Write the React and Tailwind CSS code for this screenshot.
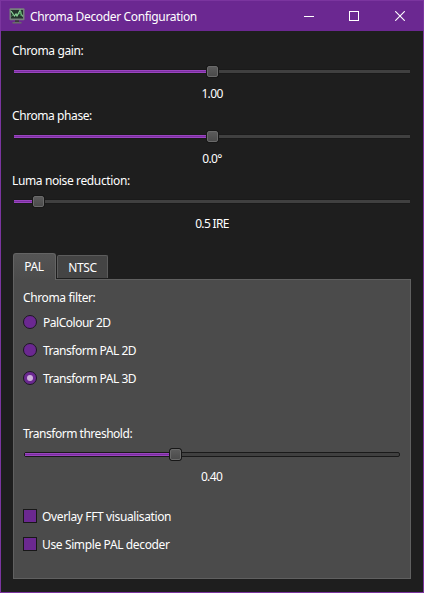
import React from "react";

function AppIcon() {
  return (
    <svg width="16" height="16" viewBox="0 0 16 16" className="shrink-0">
      <rect x="0.5" y="0.3" width="15" height="12" rx="1" fill="#77807c" />
      <rect x="2" y="2" width="12" height="8.5" fill="#24332c" />
      <path d="M2 3 L5.5 8 L7 6 L8 8 L11 2.5 L12 5.5 L13.7 8.5" fill="none" stroke="#8ed79a" strokeWidth="1.2" />
      <path d="M2.5 8.5 L4 6.5 M9.2 7 L12 3.5 V8" fill="none" stroke="#4e9a5c" strokeWidth="1" />
      <rect x="6" y="12.3" width="4" height="1.7" fill="#3a3c3a" />
      <rect x="3.5" y="14" width="9" height="1.5" fill="#6a6d6b" />
    </svg>
  );
}

function Handle({ className }) {
  return (
    <div
      className={`absolute -top-[5px] h-[13px] w-[13px] rounded-[3px] border border-[#171717] bg-[#171717] ${className}`}
    >
      <div className="h-[11px] w-[11px] rounded-[2px] border border-[#6a6a6a] bg-linear-to-b from-[#5b5b5b] to-[#4b4b4b]" />
    </div>
  );
}

function Slider({ fill, handle, track = "" }) {
  return (
    <div className={`relative h-[5px] border-y border-[#1a1a1a] bg-[#404040] ${track}`}>
      <div className={`h-[3px] border-y border-[#9a45bf] bg-[#7a2ea0] ${fill}`} />
      <Handle className={handle} />
    </div>
  );
}

function Control({ label, value, fill, handle, tracking }) {
  return (
    <div className="h-[65px]">
      <div className={`h-[18px] pl-[12px] leading-[18px] ${tracking}`}>{label}</div>
      <div className="pt-[9px] pr-[14px] pl-[14px]">
        <Slider fill={fill} handle={handle} />
      </div>
      <div className="mt-[11px] h-[18px] text-center leading-[18px] tracking-[-0.65px]">{value}</div>
    </div>
  );
}

function Radio({ label, checked }) {
  return (
    <div className="flex h-[28px] items-center">
      <div className="flex h-[14px] w-[14px] items-center justify-center rounded-full border border-[#1d1623] bg-[#6b2891]">
        {checked && <div className="h-[6px] w-[6px] rounded-full bg-[#cdb0da]" />}
      </div>
      <div className="ml-[6px] pt-[2px] tracking-[-0.48px]">{label}</div>
    </div>
  );
}

function Check({ label, tracking }) {
  return (
    <div className="flex h-[28px] items-center">
      <div className="h-[14px] w-[14px] border border-[#181818] bg-[#6b2891]" />
      <div className={`ml-[5px] pt-[2px] ${tracking}`}>{label}</div>
    </div>
  );
}

export default function App() {
  return (
    <div className="h-[593px] w-[424px] overflow-hidden border border-[#7b359f] bg-[#1e1e1e] font-['Noto_Sans','Open_Sans',sans-serif] text-[12px] whitespace-nowrap text-white">
      <header className="flex h-[30px] items-center bg-[#6b2891] pl-[8px]">
        <AppIcon />
        <div className="ml-[5px] flex-1 pt-px tracking-[-0.35px]">Chroma Decoder Configuration</div>
        <div className="flex items-center gap-[35px] pr-[18px]">
          <svg width="10" height="10" shapeRendering="crispEdges"><path d="M0 5.5H10" stroke="#fff" /></svg>
          <svg width="10" height="10" shapeRendering="crispEdges"><rect x="0.5" y="0.5" width="9" height="9" fill="none" stroke="#fff" /></svg>
          <svg width="10" height="10" className="ml-px"><path d="M0.2 0.2L9.8 9.8M9.8 0.2L0.2 9.8" stroke="#fff" strokeWidth="1.1" /></svg>
        </div>
      </header>

      <div className="-mr-px -ml-px pt-[11px]">
        <Control label="Chroma gain:" value="1.00" fill="w-[192px]" handle="left-[192px]" tracking="tracking-[-0.38px]" />
        <Control label="Chroma phase:" value="0.0°" fill="w-[192px]" handle="left-[192px]" tracking="tracking-[-0.42px]" />
        <Control label="Luma noise reduction:" value="0.5 IRE" fill="w-[18px]" handle="left-[18px]" tracking="tracking-[-0.37px]" />
      </div>

      <div className="mt-[16px] ml-[12px] w-[398px]">
        <div className="relative z-10 -mb-px flex items-end">
          <div className="flex h-[27px] w-[43px] items-center justify-center rounded-t-[3px] border border-b-0 border-[#646464] bg-linear-to-b from-[#555555] to-[#4b4b4b] pr-px tracking-[-0.45px]">
            PAL
          </div>
          <div className="mb-[2px] ml-px flex h-[23px] w-[51px] items-center justify-center rounded-t-[2px] border border-b-0 border-[#5c5c5c] bg-[#444444] pt-[2px] tracking-[-0.4px]">
            NTSC
          </div>
        </div>
        <div className="h-[300px] border border-[#606060] bg-[#4b4b4b] pr-[10px] pl-[9px]">
          <div className="pt-[9px] leading-[18px] tracking-[-0.37px]">Chroma filter:</div>
          <div className="pt-px">
            <Radio label="PalColour 2D" />
            <Radio label="Transform PAL 2D" />
            <Radio label="Transform PAL 3D" checked />
          </div>
          <div className="pt-[33px] leading-[18px] tracking-[-0.48px]">Transform threshold:</div>
          <div className="mt-[9px] ml-px">
            <Slider fill="w-[144px]" handle="left-[144px]" track="rounded-[2px] border-x" />
          </div>
          <div className="mt-[11px] mb-[16px] text-center leading-[18px] tracking-[-0.65px]">0.40</div>
          <Check label="Overlay FFT visualisation" tracking="tracking-[-0.37px]" />
          <Check label="Use Simple PAL decoder" tracking="tracking-[-0.37px]" />
        </div>
      </div>
    </div>
  );
}
